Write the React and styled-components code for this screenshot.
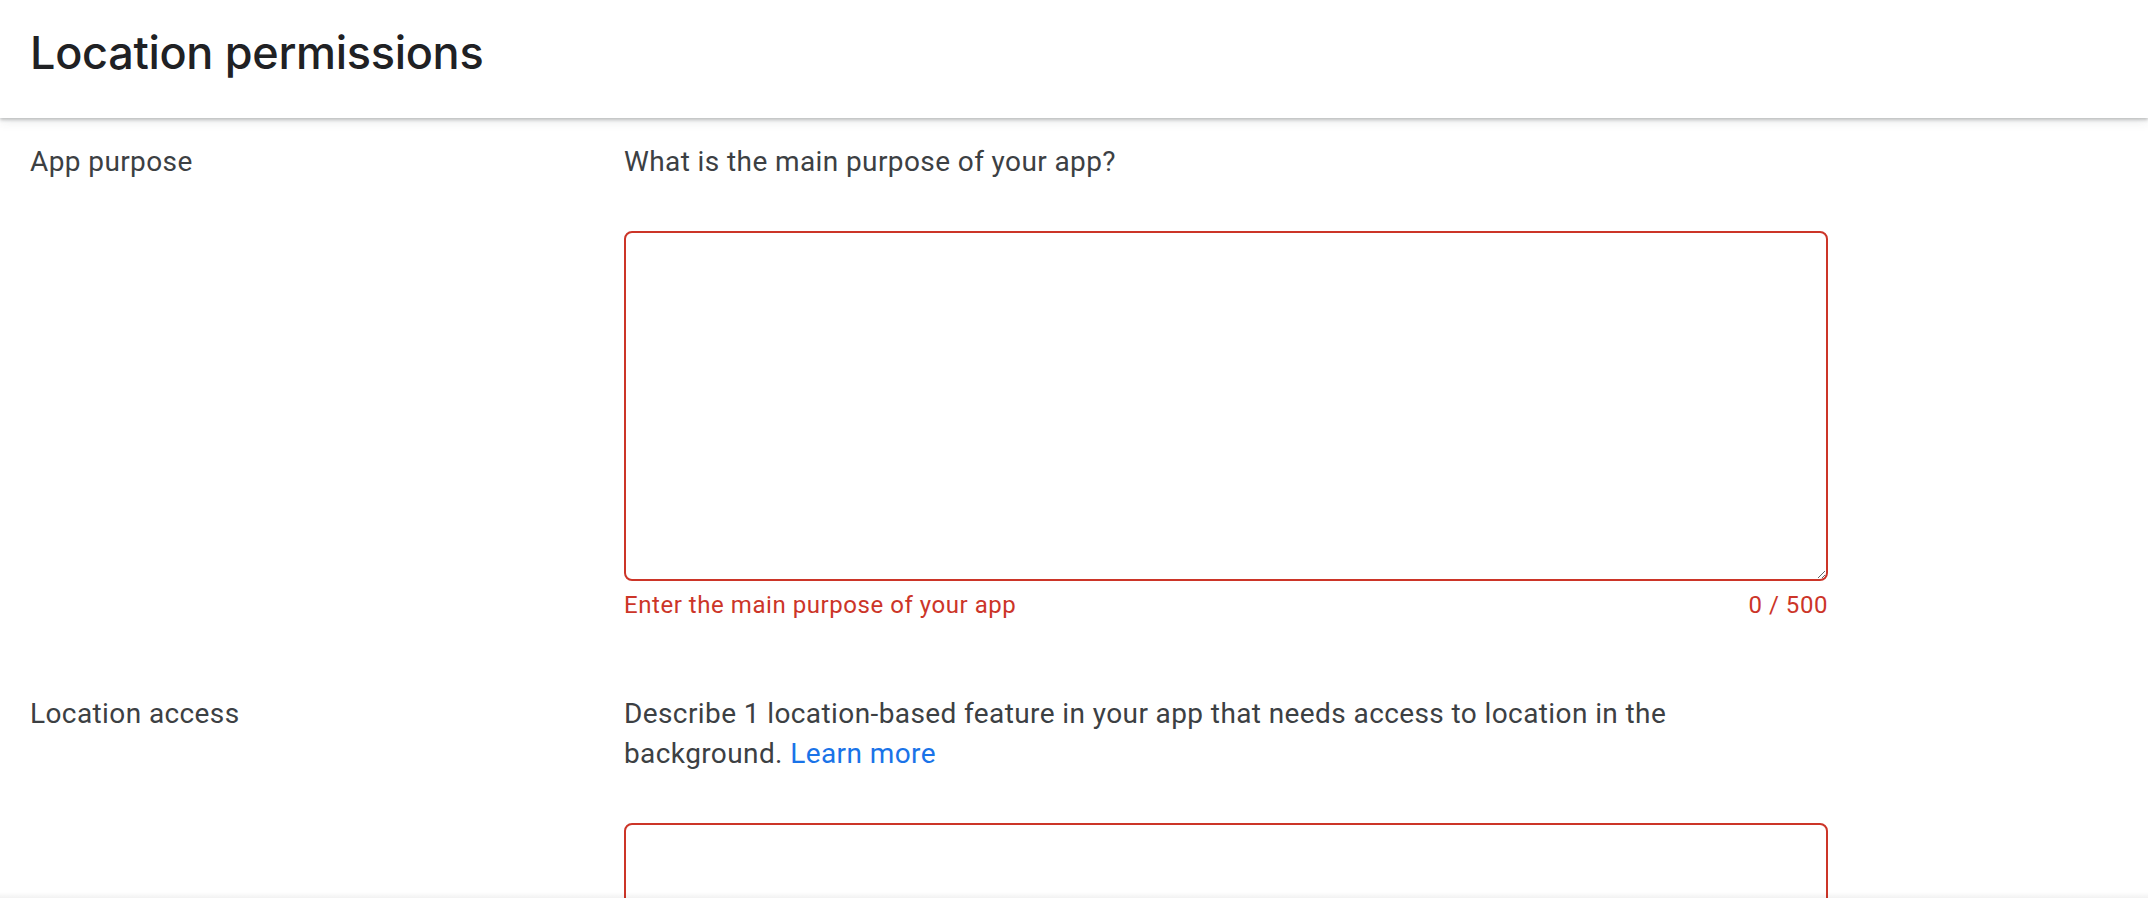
import React from "react";
import styled, { createGlobalStyle } from "styled-components";

const Global = createGlobalStyle`
  html, body { margin: 0; padding: 0; background: #fff; }
  body { font-family: Roboto, "Noto Sans", Arial, sans-serif; overflow: hidden; }
  * { box-sizing: border-box; }
`;

const Page = styled.div`
  width: 2148px;
  height: 898px;
  overflow: hidden;
  position: relative;
  background: #fff;
`;

const Header = styled.header`
  height: 118px;
  display: flex;
  align-items: center;
  padding: 0 0 14px 30px;
  background: #fff;
  box-shadow: 0 2px 3px rgba(60, 64, 67, 0.28), 0 4px 10px rgba(60, 64, 67, 0.1);
  position: relative;
  z-index: 1;
`;

const Title = styled.h1`
  margin: 0;
  font-family: Inter, "Open Sans", sans-serif;
  font-weight: 500;
  font-size: 45px;
  letter-spacing: -0.3px;
  color: #202124;
`;

const Content = styled.main`
  padding: 24px 30px 0 30px;
`;

const Row = styled.section`
  display: grid;
  grid-template-columns: 594px 1204px;
  margin-top: ${(p) => p.$gap || 0}px;
`;

const Label = styled.div`
  font-size: 28px;
  line-height: 40px;
  color: #3c4043;
  letter-spacing: 0.4px;
`;

const Field = styled.div`
  display: flex;
  flex-direction: column;
`;

const Prompt = styled.p`
  margin: 0 0 49px 0;
  font-size: 28px;
  line-height: 40px;
  color: #3c4043;
  letter-spacing: 0.4px;
`;

const Link = styled.a`
  color: #1a73e8;
  text-decoration: none;
`;

const Area = styled.textarea`
  display: block;
  width: 1204px;
  height: 350px;
  border: 2px solid #cc3528;
  border-radius: 8px;
  resize: vertical;
  padding: 16px;
  font-family: Roboto, sans-serif;
  font-size: 28px;
  outline: none;
  background: #fff;
`;

const Helper = styled.div`
  display: flex;
  justify-content: space-between;
  margin-top: 8px;
  font-size: 24px;
  line-height: 32px;
  letter-spacing: 0.55px;
  color: #cc3528;
`;

const FooterShadow = styled.div`
  position: absolute;
  left: 0;
  right: 0;
  bottom: 0;
  height: 6px;
  background: linear-gradient(to bottom, rgba(0, 0, 0, 0), rgba(0, 0, 0, 0.05));
  pointer-events: none;
`;

export default function App() {
  return (
    <Page>
      <Global />
      <Header>
        <Title>Location permissions</Title>
      </Header>
      <Content>
        <Row>
          <Label>App purpose</Label>
          <Field>
            <Prompt>What is the main purpose of your app?</Prompt>
            <Area aria-label="App purpose" />
            <Helper>
              <span>Enter the main purpose of your app</span>
              <span>0 / 500</span>
            </Helper>
          </Field>
        </Row>
        <Row $gap={73}>
          <Label>Location access</Label>
          <Field>
            <Prompt>
              Describe 1 location-based feature in your app that needs access to location in the
              <br />
              background. <Link href="#">Learn more</Link>
            </Prompt>
            <Area aria-label="Location access" />
          </Field>
        </Row>
      </Content>
      <FooterShadow />
    </Page>
  );
}
